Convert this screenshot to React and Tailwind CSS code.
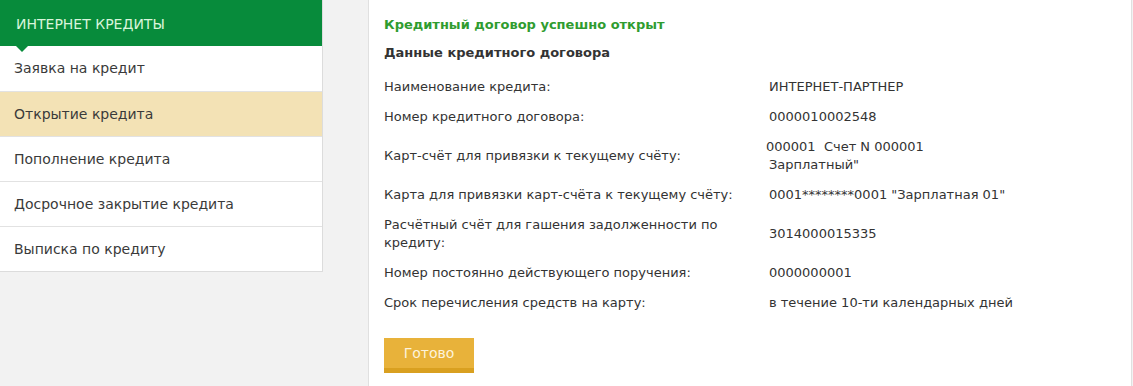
import React from 'react';

const menu = [
  'Заявка на кредит',
  'Открытие кредита',
  'Пополнение кредита',
  'Досрочное закрытие кредита',
  'Выписка по кредиту',
];

const rows = [
  { label: 'Наименование кредита:', value: 'ИНТЕРНЕТ-ПАРТНЕР' },
  { label: 'Номер кредитного договора:', value: '0000010002548' },
  {
    label: 'Карт-счёт для привязки к текущему счёту:',
    value: (
      <>
        <span className="-ml-[3px] block">000001&nbsp; Счет N 000001</span>
        <span className="block">Зарплатный"</span>
      </>
    ),
  },
  { label: 'Карта для привязки карт-счёта к текущему счёту:', value: '0001********0001 "Зарплатная 01"' },
  { label: 'Расчётный счёт для гашения задолженности по кредиту:', value: '3014000015335' },
  { label: 'Номер постоянно действующего поручения:', value: '0000000001' },
  { label: 'Срок перечисления средств на карту:', value: 'в течение 10-ти календарных дней' },
];

const App = () => {
  const active = 1;

  return (
    <div
      className="min-h-[386px] bg-[#f2f2f2] flex items-start text-[13px] text-[#333]"
      style={{ fontFamily: '"DejaVu Sans", Verdana, sans-serif' }}
    >
      <div className="w-[323px] shrink-0 bg-white border-r border-b border-[#dcdcdc]">
        <div className="relative h-[46px] bg-[#078b3b] text-[#d8f5dc] text-[14px] flex items-center pl-4 pt-[2px] uppercase">
          Интернет кредиты
          <span className="absolute left-[16px] -bottom-[6px] w-0 h-0 border-l-[6px] border-r-[6px] border-t-[6px] border-l-transparent border-r-transparent border-t-[#078b3b]" />
        </div>
        {menu.map((item, i) => (
          <div
            key={item}
            className={
              'h-[45px] flex items-center pl-[14px] text-[14px] ' +
              (i === active ? 'bg-[#f3e2b5] text-[#3a3a3a]' : 'text-[#3a3a3a]') +
              (i > 0 ? ' border-t border-[#e2e2e2]' : '')
            }
          >
            {item}
          </div>
        ))}
      </div>

      <div className="ml-[45px] w-[764px] min-h-[386px] bg-white border-l border-r border-[#e0e0e0] pl-[15px] pt-[16px]">
        <div className="font-bold text-[#2f9c2f] leading-[18px]">Кредитный договор успешно открыт</div>
        <div className="font-bold text-[#333] mt-[10px] leading-[18px]">Данные кредитного договора</div>

        <div className="mt-[16px] flex flex-col gap-[12px]">
          {rows.map((r, i) => (
            <div key={i} className="flex items-center leading-[18px]">
              <div className="w-[385px] shrink-0 pr-6">{r.label}</div>
              <div>{r.value}</div>
            </div>
          ))}
        </div>

        <button className="mt-[26px] w-[90px] h-[35px] bg-[#e8b23a] border-b-[5px] border-[#d9a020] text-[#fdf3dc] text-[14px]">
          Готово
        </button>
      </div>
    </div>
  );
};

export default App;
